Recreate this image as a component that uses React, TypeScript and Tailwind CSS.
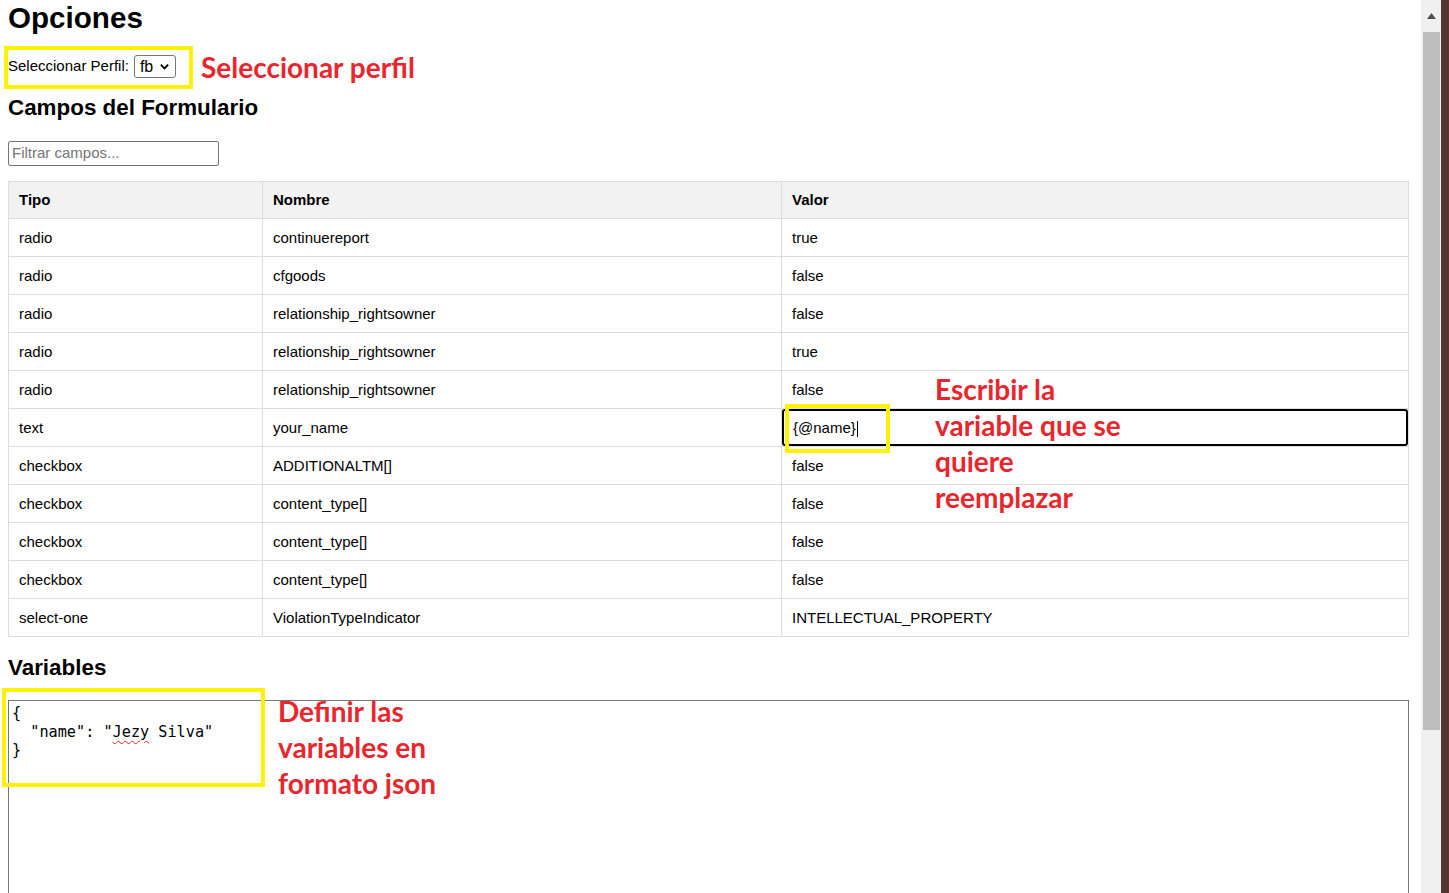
import React from 'react';

interface Campo {
  tipo: string;
  nombre: string;
  valor: string;
  editing?: boolean;
}

const campos: Campo[] = [
  { tipo: 'radio', nombre: 'continuereport', valor: 'true' },
  { tipo: 'radio', nombre: 'cfgoods', valor: 'false' },
  { tipo: 'radio', nombre: 'relationship_rightsowner', valor: 'false' },
  { tipo: 'radio', nombre: 'relationship_rightsowner', valor: 'true' },
  { tipo: 'radio', nombre: 'relationship_rightsowner', valor: 'false' },
  { tipo: 'text', nombre: 'your_name', valor: '{@name}', editing: true },
  { tipo: 'checkbox', nombre: 'ADDITIONALTM[]', valor: 'false' },
  { tipo: 'checkbox', nombre: 'content_type[]', valor: 'false' },
  { tipo: 'checkbox', nombre: 'content_type[]', valor: 'false' },
  { tipo: 'checkbox', nombre: 'content_type[]', valor: 'false' },
  { tipo: 'select-one', nombre: 'ViolationTypeIndicator', valor: 'INTELLECTUAL_PROPERTY' },
];

const note = "font-['Lato',sans-serif] font-bold text-[#e8262d] text-[28px]";

export default function App() {
  return (
    <div className="flex h-[893px] w-[1449px] overflow-hidden bg-white text-black font-['Liberation_Sans',Arial,sans-serif]">
      <div className="relative w-[1421px] shrink-0 pl-2 pr-[12px]">
        <h1 className="mt-[1px] text-[29.6px] leading-[34px] font-bold">Opciones</h1>

        <div className="mt-[20px] flex h-[23px] items-center gap-[5px] text-[15px]">
          <span>Seleccionar Perfil:</span>
          <div className="flex h-[23px] w-[42px] items-center justify-between rounded-[3px] border border-[#767676] pl-[5px] pr-[5px]">
            <span className="text-[16px] leading-none">fb</span>
            <svg className="h-[11px] w-[11px]" viewBox="0 0 12 12" fill="none" stroke="black" strokeWidth={2}>
              <path d="M2 4l4 4 4-4" />
            </svg>
          </div>
        </div>

        <h2 className="mt-[17px] text-[22.4px] leading-[26px] font-bold">Campos del Formulario</h2>

        <div className="mt-[20px] flex h-[25px] w-[211px] items-center rounded-[2px] border border-[#767676] px-[3px] text-[15px] text-[#757575]">
          Filtrar campos...
        </div>

        <table className="mt-[15px] w-[1401px] table-fixed border-collapse text-[15px]">
          <colgroup>
            <col className="w-[254px]" />
            <col className="w-[519px]" />
            <col />
          </colgroup>
          <thead>
            <tr className="bg-[#f2f2f2]">
              <th className="h-[37px] border border-[#dddddd] px-[10px] pt-[1px] text-left font-bold">Tipo</th>
              <th className="h-[37px] border border-[#dddddd] px-[10px] pt-[1px] text-left font-bold">Nombre</th>
              <th className="h-[37px] border border-[#dddddd] px-[10px] pt-[1px] text-left font-bold">Valor</th>
            </tr>
          </thead>
          <tbody>
            {campos.map((c, i) => (
              <tr key={i}>
                <td className="h-[38px] border border-[#dddddd] px-[10px] pt-[2px]">{c.tipo}</td>
                <td className="h-[38px] border border-[#dddddd] px-[10px] pt-[2px]">{c.nombre}</td>
                {c.editing ? (
                  <td className="h-[38px] border border-[#dddddd] p-0">
                    <div className="flex h-[37px] items-center rounded-[3px] border-2 border-black pl-[9px] pt-[2px]">
                      <span>{c.valor}</span>
                      <span className="ml-[1px] h-[16px] w-px bg-black" />
                    </div>
                  </td>
                ) : (
                  <td className="h-[38px] border border-[#dddddd] px-[10px] pt-[2px]">{c.valor}</td>
                )}
              </tr>
            ))}
          </tbody>
        </table>

        <h2 className="mt-[18px] text-[22.4px] leading-[26px] font-bold">Variables</h2>

        <div className="mt-[19px] h-[300px] w-[1401px] border border-[#767676] px-[3px] pt-[3px] font-['DejaVu_Sans_Mono',monospace] text-[15.2px] leading-[18.5px] whitespace-pre">
          <div>{'{'}</div>
          <div>
            {'  "name": "'}
            <span className="underline decoration-wavy decoration-[#e8262d] decoration-1 underline-offset-[3px]">Jezy</span>
            {' Silva"'}
          </div>
          <div>{'}'}</div>
        </div>

        {/* anotaciones */}
        <div className="absolute left-[4px] top-[46px] h-[43px] w-[189px] border-4 border-[#fff200]" />
        <div className={`absolute left-[201px] top-[50px] leading-[34px] ${note}`}>Seleccionar perfil</div>

        <div className="absolute left-[785px] top-[404px] h-[49px] w-[105px] border-4 border-[#fff200]" />
        <div className={`absolute left-[935px] top-[371px] leading-[36px] ${note}`}>
          <div>Escribir la</div>
          <div>variable que se</div>
          <div>quiere</div>
          <div>reemplazar</div>
        </div>

        <div className="absolute left-[2px] top-[688px] h-[99px] w-[263px] border-4 border-[#fff200]" />
        <div className={`absolute left-[278px] top-[693px] leading-[36px] ${note}`}>
          <div>Definir las</div>
          <div>variables en</div>
          <div>formato json</div>
        </div>
      </div>

      <div className="flex w-[20px] shrink-0 flex-col bg-[#f0f0f0]">
        <div className="flex h-[32px] items-center justify-center">
          <svg className="h-[6px] w-[9px]" viewBox="0 0 9 6">
            <path d="M4.5 0L9 6H0z" fill="#505050" />
          </svg>
        </div>
        <div className="ml-[2px] h-[698px] w-[17px] bg-[#bdbdbd]" />
      </div>
      <div className="w-[8px] shrink-0 bg-[#55372d]" />
    </div>
  );
}
